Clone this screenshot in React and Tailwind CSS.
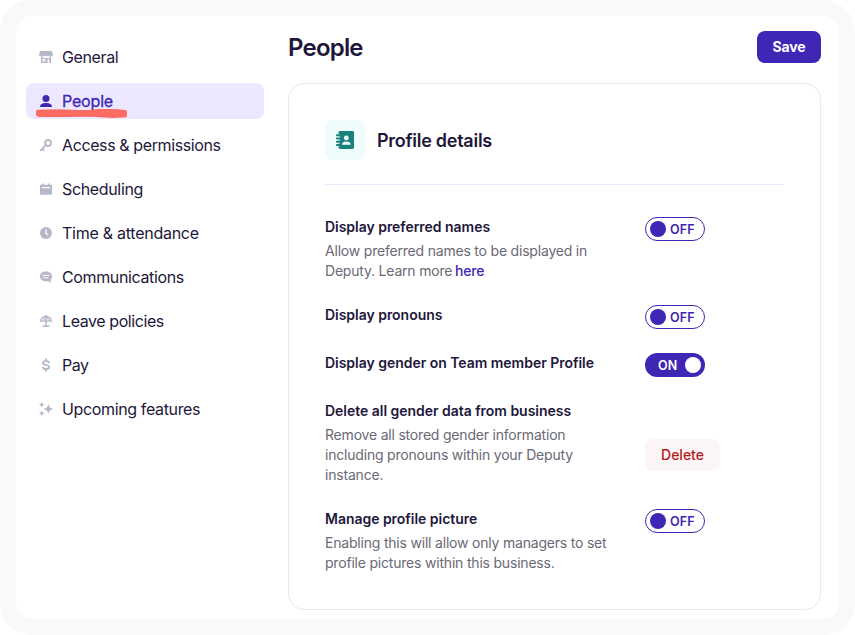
import React from "react";

const StoreIcon = () => (
  <svg viewBox="0 0 14 12" className="h-3 w-3.5" fill="currentColor">
    <path d="M1.800 0h10.400c.4 0 .7.200.8.600l.9 2.700c.3 1.100-.4 2-1.500 2-.7 0-1.300-.4-1.600-.9-.4.500-1 .9-1.800.9-.8 0-1.500-.4-2-.9-.5.500-1.100.9-1.900.9-.8 0-1.500-.4-1.900-.9-.3.500-.9.9-1.600.9C.5 5.300-.2 4.400.1 3.300L1 .6c.1-.4.400-.6.800-.6z" />
    <path fillRule="evenodd" d="M2 5.200h1.500V7h7V5.200H12V11.400c0 .4-.2.600-.6.600H10.300V8.300H8.500V12H2.600C2.200 12 2 11.800 2 11.400zM3.600 8v2.500h2.700V8z" />
  </svg>
);

const PersonIcon = () => (
  <svg viewBox="0 0 12 12" className="size-3" fill="currentColor">
    <circle cx="6" cy="3.500" r="3.500" />
    <path d="M0 12c0-2.600 2.400-4 6-4s6 1.400 6 4z" />
  </svg>
);

const KeyIcon = () => (
  <svg viewBox="0 0 12 12" className="size-3" fill="none" stroke="currentColor">
    <circle cx="8" cy="4" r="3" strokeWidth="1.900" />
    <path d="M5.800 6.200L.7 11.300M2.300 9.700l1.500 1.500" strokeWidth="1.800" strokeLinecap="round" />
  </svg>
);

const CalendarIcon = () => (
  <svg viewBox="0 0 12 12" className="size-3" fill="currentColor">
    <path
      fillRule="evenodd"
      d="M2.200.4h1.500v1.300h4.600V.4h1.500v1.300H11c.6 0 1 .4 1 1V10.700c0 .6-.4 1-1 1H1c-.6 0-1-.4-1-1V2.700c0-.6.4-1 1-1h1.200zM2 4v1.200h8V4z"
    />
  </svg>
);

const ClockIcon = () => (
  <svg viewBox="0 0 12 12" className="size-3">
    <circle cx="6" cy="6" r="6" fill="currentColor" />
    <path d="M6 2.500v3.800l1.700 1.700" fill="none" stroke="white" strokeWidth="1.300" />
  </svg>
);

const ChatIcon = () => (
  <svg viewBox="0 0 12 12" className="size-3">
    <path d="M6 .5c3.400 0 6 2.100 6 4.900 0 1.600-.6 2.900-1.600 3.800l1 2.300-3.800-1.200C3.100 10.700 0 8.400 0 5.400 0 2.600 2.600.5 6 .5z" fill="currentColor" />
    <path d="M2.800 4.400h6.500M2.800 6.800h5.500" stroke="white" strokeWidth="1" />
  </svg>
);

const UmbrellaIcon = () => (
  <svg viewBox="0 0 12 12" className="size-3 overflow-visible" fill="none" stroke="currentColor">
    <path d="M.7 6.800C.7 3.500 2.900 1.400 6 1.400s5.300 2.100 5.300 5.400" strokeWidth="1.500" />
    <path d="M.3 6.400L3.400 5.600 6 6.500l2.600-.9 3.100.8M3.400 5.800C3.500 4 4.300 2.500 6 1.500c1.700 1 2.500 2.500 2.600 4.300" strokeWidth="1.200" />
    <path d="M6-.2v11.500M2.600 11.300h6.800" strokeWidth="1.500" />
  </svg>
);

const DollarIcon = () => (
  <svg viewBox="0 0 12 12" className="size-3 overflow-visible" fill="none" stroke="currentColor" strokeWidth="1.900">
    <path d="M9.200 4C9 2.800 7.900 2.100 6 2.100S2.900 2.800 2.900 3.900C2.900 6.500 9.200 5.200 9.200 8.100c0 1.200-1.200 1.900-3.200 1.900s-3.200-.8-3.300-2" />
    <path d="M6-.4v2.600M6 9.800v2.700" />
  </svg>
);

const SparklesIcon = () => (
  <svg viewBox="0 0 14 14" className="size-3.5" fill="currentColor">
    <path d="M9.400 2.400l1.500 3.100L14 7l-3.100 1.500-1.500 3.100-1.500-3.100L4.800 7l3.100-1.500z" />
    <path d="M2.700 0l.9 1.800 1.900.9-1.900.9-.9 1.900-.9-1.900L0 2.700l1.800-.9zM2.700 8.500l.9 1.900 1.900.9-1.900.9-.9 1.800-.9-1.800L0 11.300l1.800-.9z" />
  </svg>
);

const ContactsIcon = () => (
  <svg viewBox="0 0 19 18" className="-ml-px h-[18px] w-[19px]">
    <path d="M5 0h12.500c.9 0 1.500.6 1.500 1.400v15.200c0 .8-.6 1.400-1.500 1.400H5c-.9 0-1.500-.6-1.500-1.400V1.400C3.500.6 4.100 0 5 0z" fill="#1b817c" />
    <path d="M1.900 4.300h3M1.900 7.500h3M1.900 10.700h3M1.900 13.900h3" stroke="#effcfc" strokeWidth="2.800" strokeLinecap="round" />
    <path d="M5 2.500h2v13H5z" fill="#1b817c" />
    <path d="M1.900 4.300h3.500M1.900 7.500h3.500M1.900 10.700h3.500M1.900 13.900h3.500" stroke="#1b817c" strokeWidth="2" strokeLinecap="round" />
    <circle cx="11.300" cy="6.900" r="2.400" fill="#effcfc" />
    <path d="M7 13.700c0-2 1.700-3.200 4.300-3.200s4.400 1.200 4.400 3.200z" fill="#effcfc" />
  </svg>
);

const navItems = [
  { label: "General", icon: StoreIcon, tracking: "tracking-[-0.37px]" },
  { label: "People", icon: PersonIcon, tracking: "tracking-[-0.18px]", active: true },
  { label: "Access & permissions", icon: KeyIcon, tracking: "tracking-[-0.39px]" },
  { label: "Scheduling", icon: CalendarIcon, tracking: "tracking-[-0.35px]" },
  { label: "Time & attendance", icon: ClockIcon, tracking: "tracking-[-0.26px]" },
  { label: "Communications", icon: ChatIcon, tracking: "tracking-[-0.37px]" },
  { label: "Leave policies", icon: UmbrellaIcon, tracking: "tracking-[-0.42px]" },
  { label: "Pay", icon: DollarIcon, tracking: "tracking-[-0.5px]" },
  { label: "Upcoming features", icon: SparklesIcon, tracking: "tracking-[-0.36px]" },
];

function NavItem({ label, icon: Icon, tracking, active }) {
  return (
    <a
      className={`relative flex h-9 items-center rounded-lg pl-3 text-base ${
        active ? "bg-[#ede8ff] text-[#3f26b5]" : "text-[#1e173b]"
      }`}
    >
      <span className={`flex w-4 justify-center ${active ? "text-[#3f26b5]" : "text-[#b7b7c9]"}`}>
        <Icon />
      </span>
      <span className={`ml-2 whitespace-nowrap ${tracking} ${active ? "[-webkit-text-stroke:0.3px_currentColor]" : ""}`}>
        {label}
      </span>
      {active && (
        <svg viewBox="0 0 91 9" className="absolute top-[26px] left-2.5 h-[9px] w-[91px]">
          <path d="M1 .8Q20 0 37 .7T60 .2 89 .9Q91 1 91 3V7Q91 8.700 88 8.600L77 9 60 8Q44 7.300 31 8L3 7.900Q0 7.800 0 5V3Q0 1 1 .8z" fill="#fd6b62" />
        </svg>
      )}
    </a>
  );
}

function Toggle({ on }) {
  return on ? (
    <button className="flex h-6 w-[60px] items-center justify-between rounded-full bg-[#3f26b5] pr-1 pl-[13px] text-[12.5px] font-semibold tracking-[0.2px] text-white">
      <span className="pt-px leading-4">ON</span>
      <span className="size-4 rounded-full bg-white" />
    </button>
  ) : (
    <button className="flex h-6 w-[60px] items-center gap-1 rounded-full border border-[#3f26b5] pl-1 text-[12.5px] font-semibold tracking-[0.2px] text-[#3f26b5]">
      <span className="size-4 shrink-0 rounded-full bg-[#3f26b5]" />
      <span className="pt-px leading-4">OFF</span>
    </button>
  );
}

function Setting({ title, children, control }) {
  return (
    <div className="flex min-h-6 items-start">
      <div className="w-80 shrink-0">
        <h3 className="text-sm leading-5 font-semibold tracking-[-0.03px] whitespace-nowrap">{title}</h3>
        {children && (
          <p className="mt-1 text-sm leading-5 tracking-[-0.2px] whitespace-nowrap text-[#6a6975]">{children}</p>
        )}
      </div>
      {control}
    </div>
  );
}

export default function App() {
  return (
    <div className="h-[635px] w-[855px] rounded-[32px] bg-[#f9f9fc] p-4 font-['Inter',sans-serif] text-[#1e173b]">
      <div className="flex h-[603px] rounded-2xl bg-white">
        <nav className="mt-[23px] ml-2.5 flex w-[238px] flex-col gap-2">
          {navItems.map((item) => (
            <NavItem key={item.label} {...item} />
          ))}
        </nav>
        <main className="ml-6 w-[533px] pt-[15px]">
          <header className="flex h-8 items-center justify-between">
            <h1 className="pt-0.5 text-2xl font-semibold tracking-[-0.8px]">People</h1>
            <button className="h-8 w-16 rounded-lg bg-[#3f26b5] text-sm font-bold tracking-[-0.1px] text-white">Save</button>
          </header>
          <section className="mt-5 h-[527px] rounded-2xl border border-[#e9e9ec] p-9">
            <div className="flex items-center gap-3 border-b border-[#ebe8ff] pb-6">
              <div className="flex size-10 items-center justify-center rounded-lg bg-[#effcfc]">
                <ContactsIcon />
              </div>
              <h2 className="pt-0.5 text-lg font-semibold tracking-[-0.27px]">Profile details</h2>
            </div>
            <div className="mt-8 flex flex-col gap-6">
              <Setting title="Display preferred names" control={<Toggle />}>
                Allow preferred names to be displayed in
                <br />
                Deputy. Learn more <a className="-ml-px font-medium text-[#3f26b5]">here</a>
              </Setting>
              <Setting title="Display pronouns" control={<Toggle />} />
              <Setting title="Display gender on Team member Profile" control={<Toggle on />} />
              <Setting
                title="Delete all gender data from business"
                control={
                  <button className="mt-[38px] h-8 w-[75px] rounded-lg bg-[#fcf5f5] text-sm font-medium text-[#b01c1c]">
                    Delete
                  </button>
                }
              >
                Remove all stored gender information
                <br />
                including pronouns within your Deputy
                <br />
                instance.
              </Setting>
              <Setting title="Manage profile picture" control={<Toggle />}>
                Enabling this will allow only managers to set
                <br />
                profile pictures within this business.
              </Setting>
            </div>
          </section>
        </main>
      </div>
    </div>
  );
}
